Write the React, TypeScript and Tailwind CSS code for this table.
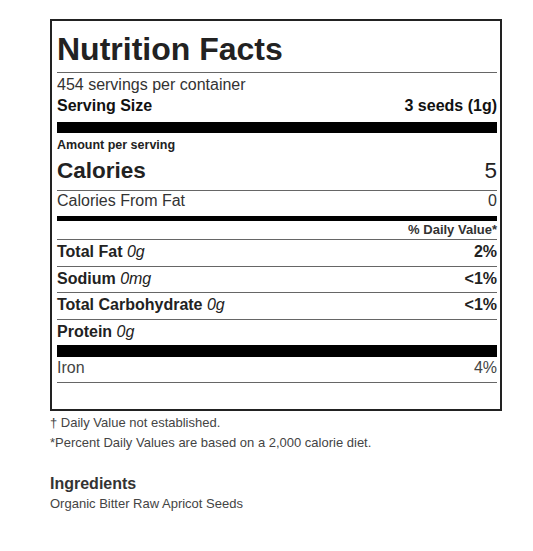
import React from "react";

const rows = [
  { label: "Total Fat", amount: "0g", dv: "2%", h: "h-[27px]" },
  { label: "Sodium", amount: "0mg", dv: "<1%", h: "h-[26px]" },
  { label: "Total Carbohydrate", amount: "0g", dv: "<1%", h: "h-[27px]" },
];

export default function App() {
  return (
    <div
      className="w-[533px] h-[551px] bg-white text-[#333] pt-[19px] pl-[50px]"
      style={{ fontFamily: '"Liberation Sans", Arial, sans-serif' }}
    >
      <div className="w-[452px] border-2 border-[#222] pl-[5px] pr-[3px] pb-[26px]">
        <div className="pt-[12px] pb-[7px] border-b border-[#666]">
          <div className="text-[32px] leading-[32px] font-bold text-[#222]">Nutrition Facts</div>
        </div>
        <div className="mt-[2px] text-[16px] leading-[20px]">454 servings per container</div>
        <div className="mt-[1px] flex justify-between text-[16px] leading-[20px] font-bold text-[#111]">
          <span>Serving Size</span>
          <span>3 seeds (1g)</span>
        </div>
        <div className="mt-[6px] h-[11px] bg-black" />
        <div className="mt-[4px] text-[12.5px] leading-[16px] font-bold text-[#222]">Amount per serving</div>
        <div className="mt-[5px] pb-[6px] border-b border-[#666] flex justify-between text-[22.5px] leading-[26px] text-[#222]">
          <span className="font-bold">Calories</span>
          <span>5</span>
        </div>
        <div className="flex justify-between text-[16px] leading-[20px]">
          <span>Calories From Fat</span>
          <span>0</span>
        </div>
        <div className="mt-[5px] h-[5px] bg-black" />
        <div className="mt-[2px] pb-[2px] border-b border-[#666] text-right text-[13px] leading-[14px] font-bold text-[#333]">
          % Daily Value*
        </div>
        {rows.map((r) => (
          <div
            key={r.label}
            className={`${r.h} border-b border-[#666] flex items-center justify-between pb-[2px] text-[16px] leading-[20px] text-[#222]`}
          >
            <span>
              <span className="font-bold">{r.label}</span> <span className="italic">{r.amount}</span>
            </span>
            <span className="font-bold">{r.dv}</span>
          </div>
        ))}
        <div className="h-[25px] flex items-center pb-[2px] text-[16px] leading-[20px] text-[#222]">
          <span>
            <span className="font-bold">Protein</span> <span className="italic">0g</span>
          </span>
        </div>
        <div className="h-[12px] bg-black" />
        <div className="mt-[1px] pb-[4px] border-b border-[#666] flex justify-between text-[16px] leading-[20px] text-[#444]">
          <span>Iron</span>
          <span>4%</span>
        </div>
      </div>
      <div className="mt-[2px] text-[13px] leading-[19px] text-[#444]">† Daily Value not established.</div>
      <div className="mt-[1px] text-[13px] leading-[19px] text-[#444]">
        *Percent Daily Values are based on a 2,000 calorie diet.
      </div>
      <div className="mt-[22px] text-[16px] leading-[20px] font-bold text-[#333]">Ingredients</div>
      <div className="text-[13px] leading-[19px] text-[#444]">Organic Bitter Raw Apricot Seeds</div>
    </div>
  );
}
